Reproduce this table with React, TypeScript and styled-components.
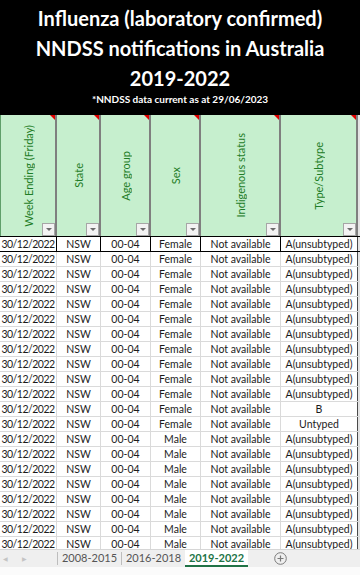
import styled, { createGlobalStyle } from 'styled-components';

const GlobalStyle = createGlobalStyle`
  html, body {
    margin: 0;
    padding: 0;
    background: #ffffff;
  }
  body {
    width: 360px;
    height: 575px;
    overflow: hidden;
    font-family: Lato, 'Liberation Sans', sans-serif;
  }
`;

const COLS = '57px 44px 50px 50px 80px 77px 2px';

const Page = styled.div`
  display: flex;
  flex-direction: column;
  width: 360px;
  height: 575px;
  overflow: hidden;
`;

const TitleBlock = styled.header`
  height: 115px;
  box-sizing: border-box;
  padding-top: 3px;
  background: #000;
  color: #fff;
  display: flex;
  flex-direction: column;
  align-items: center;
`;

const TitleLine = styled.div`
  font-size: 20px;
  font-weight: 700;
  line-height: 30px;
  white-space: nowrap;
`;

const Note = styled.div`
  font-size: 10px;
  font-weight: 700;
  line-height: 12px;
`;

const HeaderRow = styled.div`
  display: grid;
  grid-template-columns: ${COLS};
  height: 122px;
  border-bottom: 1px solid #000;
  box-sizing: border-box;
`;

const HeaderCell = styled.div<{ $first?: boolean }>`
  position: relative;
  display: flex;
  align-items: center;
  justify-content: center;
  background: #c6efce;
  border-right: 2px solid #7f7f7f;
  border-left: ${({ $first }) => ($first ? '1px solid #5f9f6a' : 'none')};
  box-sizing: border-box;
`;

const HeaderText = styled.span`
  writing-mode: vertical-rl;
  transform: rotate(180deg);
  font-size: 11px;
  color: #1f7d27;
  white-space: nowrap;
`;

const CommentMark = styled.span`
  position: absolute;
  top: 0;
  right: 0;
  width: 0;
  height: 0;
  border-top: 5px solid #e00000;
  border-left: 5px solid transparent;
`;

const FilterButton = styled.span`
  position: absolute;
  right: 0;
  bottom: 0;
  width: 13px;
  height: 13px;
  box-sizing: border-box;
  border: 1px solid #a6a6a6;
  background: #f3f3f3;
  display: flex;
  align-items: center;
  justify-content: center;

  &::after {
    content: '';
    width: 0;
    height: 0;
    border-top: 3px solid #6b6b6b;
    border-left: 3px solid transparent;
    border-right: 3px solid transparent;
  }
`;

const Gutter = styled.div`
  background: #e4e4e4;
`;

const Body = styled.div`
  flex: 1;
  overflow: hidden;
`;

const DataRow = styled.div<{ $first?: boolean }>`
  display: grid;
  grid-template-columns: ${COLS};
  height: 15px;
  box-sizing: border-box;
  border-bottom: 1px solid ${({ $first }) => ($first ? '#000' : '#dadada')};
`;

const Cell = styled.div<{ $first?: boolean; $edge?: boolean; $tight?: boolean }>`
  display: flex;
  align-items: center;
  justify-content: center;
  border-right: 1px solid
    ${({ $first, $edge }) => ($edge ? '#4a4a4a' : $first ? '#000' : '#dadada')};
  box-sizing: border-box;
  font-size: 10.5px;
  letter-spacing: ${({ $tight }) => ($tight ? '-0.5px' : '0')};
  line-height: 14px;
  color: #1b1b1b;
  white-space: nowrap;
  overflow: hidden;
`;

const TabBar = styled.nav`
  height: 18px;
  display: flex;
  align-items: stretch;
  background: #efefef;
  border-top: 1px solid #d6d6d6;
  box-sizing: border-box;
  font-size: 11px;
`;

const NavArea = styled.div`
  width: 57px;
  display: flex;
  align-items: center;
  gap: 14px;
  padding-left: 3px;
  box-sizing: border-box;
  color: #c4c4c4;
  font-size: 6px;
`;

const Separator = styled.span`
  width: 1px;
  margin: 2px 0;
  background: #bdbdbd;
`;

const Tab = styled.div<{ $active?: boolean }>`
  width: 63px;
  display: flex;
  align-items: center;
  justify-content: center;
  color: ${({ $active }) => ($active ? '#217346' : '#555')};
  font-weight: ${({ $active }) => ($active ? 700 : 400)};
  background: ${({ $active }) => ($active ? '#fff' : 'transparent')};
  border-bottom: 2px solid ${({ $active }) => ($active ? '#217346' : 'transparent')};
  box-sizing: border-box;
`;

const AddSheet = styled.div`
  margin-left: 26px;
  display: flex;
  align-items: center;
`;

const StatusStrip = styled.div`
  height: 8px;
  background: #fbfbfb;
`;

const headers = [
  'Week Ending (Friday)',
  'State',
  'Age group',
  'Sex',
  'Indigenous status',
  'Type/Subtype',
];

const rows = Array.from({ length: 21 }, (_, i) => ({
  week: '30/12/2022',
  state: 'NSW',
  age: '00-04',
  sex: i < 13 ? 'Female' : 'Male',
  indigenous: 'Not available',
  type: i === 11 ? 'B' : i === 12 ? 'Untyped' : 'A(unsubtyped)',
}));

export default function App(): JSX.Element {
  return (
    <>
      <GlobalStyle />
      <Page>
        <TitleBlock>
          <TitleLine>Influenza (laboratory confirmed)</TitleLine>
          <TitleLine>NNDSS notifications in Australia</TitleLine>
          <TitleLine>2019-2022</TitleLine>
          <Note>*NNDSS data current as at 29/06/2023</Note>
        </TitleBlock>

        <HeaderRow>
          {headers.map((h, i) => (
            <HeaderCell key={h} $first={i === 0}>
              <HeaderText>{h}</HeaderText>
              <CommentMark />
              <FilterButton />
            </HeaderCell>
          ))}
          <Gutter />
        </HeaderRow>

        <Body>
          {rows.map((r, i) => (
            <DataRow key={i} $first={i === 0}>
              <Cell $first={i === 0} $tight>
                {r.week}
              </Cell>
              <Cell $first={i === 0}>{r.state}</Cell>
              <Cell $first={i === 0}>{r.age}</Cell>
              <Cell $first={i === 0}>{r.sex}</Cell>
              <Cell $first={i === 0}>{r.indigenous}</Cell>
              <Cell $first={i === 0} $edge>
                {r.type}
              </Cell>
              <Gutter />
            </DataRow>
          ))}
        </Body>

        <TabBar>
          <NavArea>
            <span>◀</span>
            <span>▶</span>
          </NavArea>
          <Separator />
          <Tab>2008-2015</Tab>
          <Separator />
          <Tab>2016-2018</Tab>
          <Tab $active>2019-2022</Tab>
          <AddSheet>
            <svg width="13" height="13" viewBox="0 0 13 13">
              <circle cx="6.5" cy="6.5" r="5.8" fill="none" stroke="#7a7a7a" strokeWidth="1" />
              <path d="M6.5 3.5v6M3.5 6.5h6" stroke="#7a7a7a" strokeWidth="1.2" />
            </svg>
          </AddSheet>
        </TabBar>
        <StatusStrip />
      </Page>
    </>
  );
}
